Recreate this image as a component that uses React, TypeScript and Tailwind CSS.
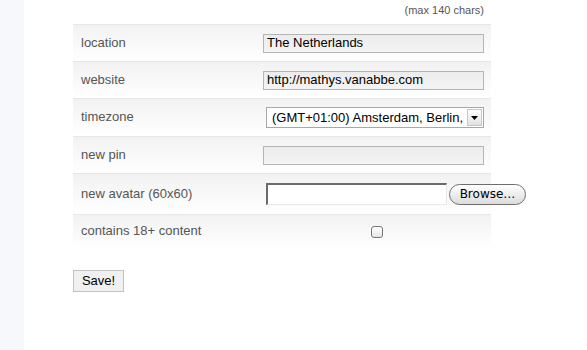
import React from "react";

const font = { fontFamily: '"Liberation Sans", Arial, sans-serif' };

function Row({ label, children, h = "h-[37px]" }: { label: string; children: React.ReactNode; h?: string }) {
  return (
    <div className={`flex items-center border-t border-[#e6e6e6] bg-gradient-to-b from-[#f2f2f2] to-white ${h}`}>
      <div className="w-[182px] shrink-0 pl-[8px] pb-[1px] text-[13px] text-[#555]">{label}</div>
      <div className="w-[236px] shrink-0 flex items-center">{children}</div>
    </div>
  );
}

function TextBox({ value }: { value?: string }) {
  return (
    <div className="ml-[8px] shrink-0 w-[221px] h-[19px] border border-[#b5b5b5] bg-gradient-to-b from-[#ececec] to-[#f4f4f4] text-[13px] text-black leading-[16px] pl-[3px]">
      {value}
    </div>
  );
}

export default function App() {
  return (
    <div className="flex h-[350px] w-[587px] bg-white overflow-hidden" style={font}>
      <div className="w-[24px] shrink-0 h-full bg-[#f7f8fc]" />
      <div className="pl-[49px] flex flex-col">
        <div className="w-[418px] h-[24px] flex justify-end pr-[7px] pt-[2px] text-[11px] text-[#555]">(max 140 chars)</div>
        <div className="w-[418px] flex flex-col">
          <Row label="location">
            <TextBox value="The Netherlands" />
          </Row>
          <Row label="website">
            <TextBox value="http://mathys.vanabbe.com" />
          </Row>
          <Row label="timezone" h="h-[38px]">
            <div className="ml-[11px] shrink-0 w-[218px] h-[21px] border border-[#a8a8a8] bg-white flex items-center justify-between">
              <span className="pl-[5px] text-[13px] text-black whitespace-nowrap overflow-hidden">(GMT+01:00) Amsterdam, Berlin,</span>
              <span className="mr-[1px] shrink-0 w-[15px] h-[17px] border border-[#c8c8c8] bg-gradient-to-b from-white to-[#e2e2e2] flex items-center justify-center">
                <svg width="7" height="4" viewBox="0 0 7 4"><path d="M0 0h7L3.5 4z" fill="#000" /></svg>
              </span>
            </div>
          </Row>
          <Row label="new pin">
            <TextBox />
          </Row>
          <Row label="new avatar (60x60)" h="h-[41px]">
            <div className="ml-[11px] shrink-0 w-[181px] h-[22px] border-t-2 border-l-2 border-r border-b border-t-[#6a6a6a] border-l-[#6a6a6a] border-r-[#e8e8e8] border-b-[#e8e8e8] bg-white" />
            <div className="ml-[2px] shrink-0 w-[77px] h-[21px] rounded-full border border-[#6e6e6e] bg-gradient-to-b from-white to-[#dcdcdc] flex items-center justify-center text-black" style={{ fontFamily: '"DejaVu Sans", sans-serif', fontSize: 12 }}>
              Browse…
            </div>
          </Row>
          <Row label="contains 18+ content" h="h-[34px]">
            <div className="ml-[116px] shrink-0 w-[12px] h-[12px] rounded-[3px] border border-[#777] bg-gradient-to-b from-white to-[#e6e6e6]" />
          </Row>
        </div>
        <div className="mt-[22px]">
          <div className="w-[51px] h-[22px] border border-[#c2c2c2] bg-[#f0f0f0] flex items-center justify-center text-[13px] text-black">Save!</div>
        </div>
      </div>
    </div>
  );
}
